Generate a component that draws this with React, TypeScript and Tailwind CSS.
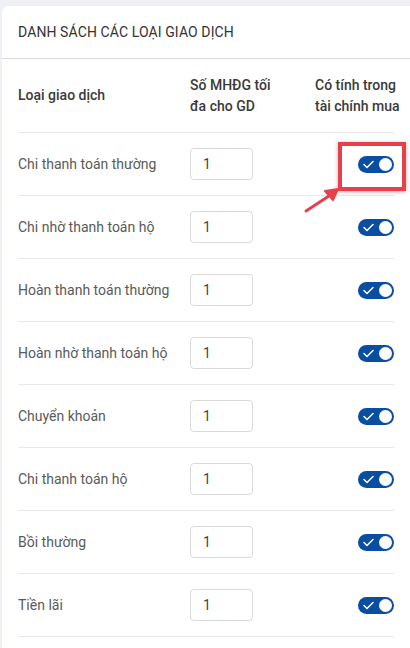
import React from 'react'

const ROWS = [
  'Chi thanh toán thường',
  'Chi nhờ thanh toán hộ',
  'Hoàn thanh toán thường',
  'Hoàn nhờ thanh toán hộ',
  'Chuyển khoản',
  'Chi thanh toán hộ',
  'Bồi thường',
  'Tiền lãi',
]

function Toggle() {
  return (
    <div className="w-[36px] h-[17px] rounded-full bg-[#0a4ea3] flex items-center justify-between pl-[5px] pr-[2px]">
      <svg width="11" height="9" viewBox="0 0 11 9" fill="none">
        <path d="M1 4.5 L4 7.5 L10 1.5" stroke="white" strokeWidth="1.5" strokeLinecap="round" strokeLinejoin="round" />
      </svg>
      <div className="w-[13px] h-[13px] rounded-full bg-white" />
    </div>
  )
}

export default function App() {
  return (
    <div
      className="relative w-[410px] h-[648px] overflow-hidden bg-[#eef0f5] pl-[2px] pt-[6px]"
      style={{ fontFamily: 'Roboto, "Noto Sans", sans-serif' }}
    >
      <div className="bg-white rounded-l-[6px] h-[700px]">
        {/* title */}
        <div className="h-[53px] flex items-center px-[16px] border-b border-[#d9d9d9]">
          <span className="text-[14px] text-[#333] tracking-[0.1px]">DANH SÁCH CÁC LOẠI GIAO DỊCH</span>
        </div>

        <div className="px-[16px]">
          {/* table header */}
          <div className="h-[74px] flex items-center border-b border-[#e8e8e8] text-[14px] font-medium text-[#3a3a3a] leading-[21px]">
            <div className="w-[172px] shrink-0">Loại giao dịch</div>
            <div className="w-[125px] shrink-0 flex flex-col">
              <span>Số MHĐG tối</span>
              <span>đa cho GD</span>
            </div>
            <div className="flex-1 min-w-0 flex flex-col whitespace-nowrap">
              <span>Có tính trong</span>
              <span>tài chính mua</span>
            </div>
          </div>

          {ROWS.map((label) => (
            <div key={label} className="h-[63px] flex items-center border-b border-[#e8e8e8] text-[14px] text-[#5a5a5a]">
              <div className="w-[172px] shrink-0">{label}</div>
              <div className="w-[125px] shrink-0">
                <div className="w-[63px] h-[32px] border border-[#d9d9d9] rounded-[4px] flex items-center pl-[12px] text-[#444]">
                  1
                </div>
              </div>
              <div className="flex-1 flex justify-end">
                <Toggle />
              </div>
            </div>
          ))}
        </div>
      </div>

      {/* highlight box */}
      <div className="absolute left-[338px] top-[142px] w-[68px] h-[49px] border-[4px] border-[#e8404a] shadow-[0_1px_4px_rgba(0,0,0,0.3)]" />
      {/* arrow */}
      <svg className="absolute left-0 top-0" width="410" height="648" fill="none">
        <line x1="306" y1="211" x2="332" y2="194" stroke="#e8404a" strokeWidth="3" strokeLinecap="round" />
        <path d="M338 189 L325 191 L333 200 Z" fill="#e8404a" stroke="#e8404a" strokeWidth="2" strokeLinejoin="round" />
      </svg>
    </div>
  )
}
